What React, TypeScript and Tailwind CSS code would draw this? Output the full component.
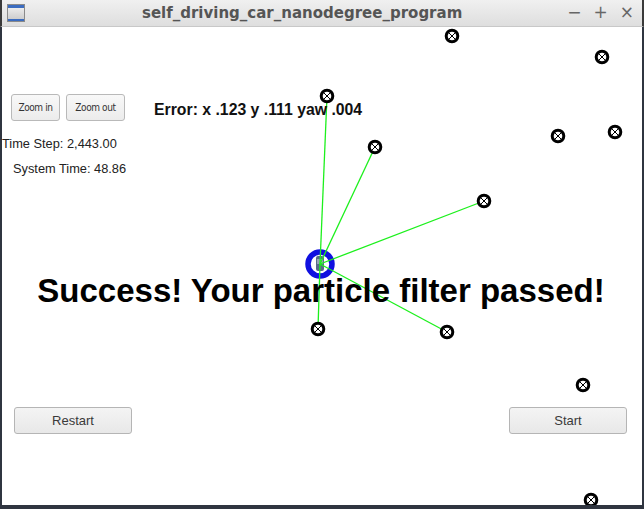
const landmarks: [number, number][] = [
  [452, 36],
  [602, 57],
  [558, 136],
  [615, 132],
  [327, 96],
  [375, 147],
  [484, 201],
  [318, 329],
  [447, 332],
  [583, 385],
  [591, 500],
];

const observed: [number, number][] = [
  [327, 96],
  [375, 147],
  [484, 201],
  [447, 332],
  [318, 329],
];

const robot = { x: 320, y: 264 };

function Landmark({ x, y }: { x: number; y: number }) {
  return (
    <g>
      <circle cx={x} cy={y} r={5.8} fill="white" stroke="black" strokeWidth={3} />
      <line x1={x - 3} y1={y - 3} x2={x + 3} y2={y + 3} stroke="black" strokeWidth={1} />
      <line x1={x - 3} y1={y + 3} x2={x + 3} y2={y - 3} stroke="black" strokeWidth={1} />
    </g>
  );
}

function Scene() {
  // scene is drawn in window coordinates, shifted into the content box
  return (
    <svg
      className="absolute left-0 top-0"
      width={639}
      height={478}
      viewBox="2 27 639 478"
    >
      <circle cx={robot.x} cy={robot.y} r={12} fill="none" stroke="#1010e0" strokeWidth={5.5} />
      <rect x={robot.x - 4} y={robot.y - 8} width={8} height={15} rx={2} fill="#5a6a8a" />
      <rect x={robot.x - 3} y={robot.y - 5} width={6} height={5} fill="#9aa4b8" />
      {observed.map(([x, y], i) => (
        <line key={i} x1={robot.x} y1={robot.y} x2={x} y2={y} stroke="#1cf01c" strokeWidth={1.3} />
      ))}
      {landmarks.map(([x, y], i) => (
        <Landmark key={i} x={x} y={y} />
      ))}
    </svg>
  );
}

function SmallButton({ label, w }: { label: string; w: string }) {
  return (
    <div
      className={`${w} h-[27px] flex items-center justify-center rounded-[3px] border border-[#b9b9b9] bg-gradient-to-b from-[#f8f8f8] to-[#ececec] text-[10px] text-[#333] tracking-[-0.4px]`}
      style={{ fontFamily: '"Liberation Sans Narrow", "DejaVu Sans Condensed", "Liberation Sans", sans-serif' }}
    >
      {label}
    </div>
  );
}

function WideButton({ label }: { label: string }) {
  return (
    <div className="w-[118px] h-[27px] flex items-center justify-center rounded-[3px] border border-[#b5b5b5] bg-gradient-to-b from-[#f4f4f4] to-[#e8e8e8] text-[13px] text-[#3a3a3a]">
      {label}
    </div>
  );
}

export default function App() {
  return (
    <div
      className="w-[644px] h-[509px] bg-[#2f3540] flex flex-col"
      style={{ fontFamily: '"Liberation Sans", Arial, sans-serif' }}
    >
      <div className="h-[27px] flex items-center bg-gradient-to-b from-[#f0f0f0] to-[#dedede] border-b border-[#c8c8c8] border-l-2 border-l-[#3a3a3a] border-r-2 border-r-[#3a3a3a]">
        <div className="ml-[5px] w-[18px] h-[18px] border border-[#8a8a8a] bg-gradient-to-b from-[#f4f4f4] to-[#c8c8c8] flex flex-col">
          <div className="h-[3px] bg-[#3b6cc0]" />
          <div className="flex-1" />
          <div className="h-[2px] bg-[#3b6cc0]" />
        </div>
        <div
          className="flex-1 text-center text-[15px] font-bold text-[#555] pl-[12px]"
          style={{ fontFamily: '"DejaVu Sans", sans-serif' }}
        >
          self_driving_car_nanodegree_program
        </div>
        <div
          className="flex items-center gap-[12px] mr-[8px] text-[#666] text-[17px]"
          style={{ fontFamily: '"DejaVu Sans", sans-serif' }}
        >
          <span>−</span>
          <span>+</span>
          <span>×</span>
        </div>
      </div>

      <div className="relative flex-1 bg-white mx-[2px] mb-[4px] flex flex-col text-black">
        <Scene />

        <div className="relative pt-[67px] pl-[9px]">
          <div className="flex gap-[6px]">
            <SmallButton label="Zoom in" w="w-[49px]" />
            <SmallButton label="Zoom out" w="w-[59px]" />
          </div>
        </div>
        <div className="relative mt-[15px] text-[12.8px] leading-[16px] text-[#222]">
          <div className="pl-0">Time Step: 2,443.00</div>
          <div className="pl-[11px] mt-[9px]">System Time: 48.86</div>
        </div>

        <div className="absolute left-[152px] top-[74px] text-[15.8px] font-bold text-[#111] leading-[18px]">
          Error: x .123 y .111 yaw .004
        </div>

        <div className="absolute left-0 right-0 top-[244px] text-center text-[33px] font-bold leading-[40px] pr-[2px]">
          Success! Your particle filter passed!
        </div>

        <div className="relative mt-auto mb-[71px] flex justify-between pl-[12px] pr-[15px]">
          <WideButton label="Restart" />
          <WideButton label="Start" />
        </div>
      </div>
    </div>
  );
}
